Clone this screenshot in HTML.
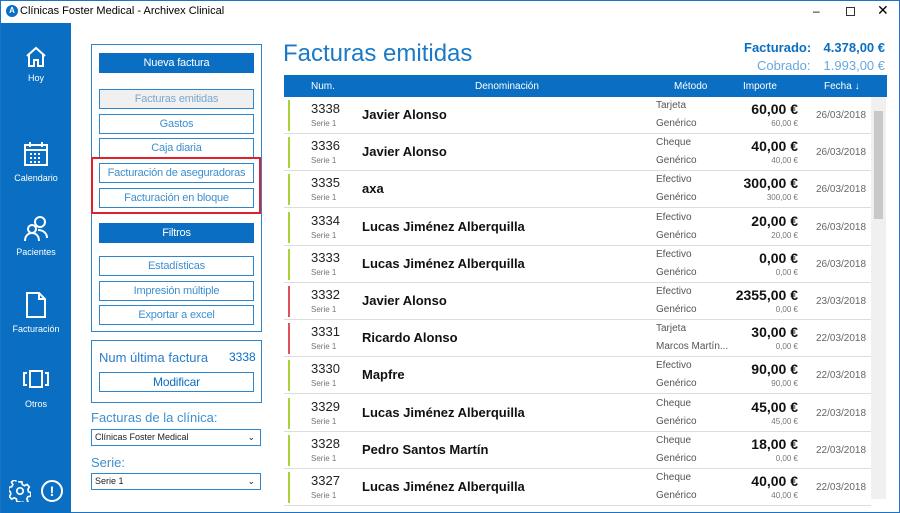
<!DOCTYPE html><html><head><meta charset="utf-8"><style>
*{margin:0;padding:0;box-sizing:border-box}
body{width:900px;height:513px;overflow:hidden;background:#fff;font-family:"Liberation Sans",sans-serif;position:relative;border:1px solid #1a73c4}
.a{position:absolute}
.title{left:0;top:0;width:898px;height:22px;background:#fff;font-size:12px;color:#000}
.side{left:0;top:22px;width:70px;height:490px;background:#0a6fc2;color:#fff;font-size:9px;text-align:center}
.side .it{position:absolute;left:0;width:70px}
.btn{position:absolute;left:98px;width:155px;height:20px;border:1px solid #2d86cc;color:#3d8fd0;font-size:11px;text-align:center;line-height:18px;background:#fff;white-space:nowrap;letter-spacing:-0.2px}
.bf{background:#0a6fc2;color:#fff;border-color:#0a6fc2}
.hdr{left:283px;top:74px;width:603px;height:22px;background:#0a6fc2;color:#fff;font-size:10px}
.hdr span{position:absolute;top:6px}
.row{position:absolute;left:283px;width:587px;height:37px;border-bottom:1px solid #ddd}
.row .bar{position:absolute;left:4px;top:3px;width:2px;height:31px;background:#a8d13a}
.n{position:absolute;left:27px;top:4px;font-size:13px;color:#222}
.s{position:absolute;left:27px;top:22px;font-size:8px;color:#777}
.nm{position:absolute;left:78px;top:10px;font-size:13px;font-weight:bold;color:#111}
.m1{position:absolute;left:372px;top:3px;font-size:10px;color:#555}
.m2{position:absolute;left:372px;top:21px;font-size:10px;color:#555}
.i1{position:absolute;right:73px;top:4px;font-size:14px;font-weight:bold;color:#111}
.i2{position:absolute;right:73px;top:22px;font-size:8px;color:#777}
.f{position:absolute;left:532px;top:13px;font-size:10px;color:#666}
.sel{position:absolute;left:90px;width:170px;height:17px;border:1px solid #2d86cc;font-size:9px;line-height:15px;padding-left:3px;color:#222}
.sel b{position:absolute;right:5px;top:0;font-weight:normal;font-size:9px}
</style></head><body>
<div class="a title"><span style="position:absolute;left:5px;top:4px;width:12px;height:12px;border-radius:50%;background:#0a6fc2;color:#fff;font-size:8px;text-align:center;line-height:12px;font-weight:bold">A</span><span style="position:absolute;left:19px;top:4px;font-size:11px">Clínicas Foster Medical - Archivex Clinical</span>
<span style="position:absolute;left:812px;top:3px;font-size:12px">–</span><span style="position:absolute;left:845px;top:6px;width:9px;height:9px;border:1px solid #333"></span><span style="position:absolute;left:876px;top:1px;font-size:14px">✕</span></div>
<div class="a side">
<div class="it" style="top:22px"><svg width="24" height="24" viewBox="0 0 24 24" fill="none" stroke="#fff" stroke-width="2"><path d="M3 11 12 3l9 8M5 9v12h5v-6h4v6h5V9"/></svg><div style="margin-top:2px">Hoy</div></div>
<div class="it" style="top:118px"><svg width="26" height="26" viewBox="0 0 26 26" fill="none" stroke="#fff" stroke-width="2"><rect x="2" y="4" width="22" height="20"/><path d="M2 9h22M7 1v5M19 1v5"/><path d="M7 13h12M7 17h12M7 21h12" stroke-dasharray="2 2"/></svg><div style="margin-top:4px">Calendario</div></div>
<div class="it" style="top:192px"><svg width="26" height="28" viewBox="0 0 26 28" fill="none" stroke="#fff" stroke-width="2"><circle cx="17" cy="7" r="5"/><circle cx="9" cy="14" r="4"/><path d="M2 26c0-5 3-8 7-8s7 3 7 8M15 15c5 0 9 3 9 8"/></svg><div style="margin-top:2px">Pacientes</div></div>
<div class="it" style="top:268px"><svg width="22" height="28" viewBox="0 0 22 28" fill="none" stroke="#fff" stroke-width="2"><path d="M2 2h12l6 6v18H2zM14 2v6h6"/></svg><div style="margin-top:3px">Facturación</div></div>
<div class="it" style="top:346px"><svg width="28" height="20" viewBox="0 0 28 20" fill="none" stroke="#fff" stroke-width="2"><rect x="8" y="2" width="12" height="16"/><path d="M5 4H2v12h3M23 4h3v12h-3"/></svg><div style="margin-top:8px">Otros</div></div>
<svg style="position:absolute;left:8px;top:457px" width="22" height="22" viewBox="0 0 24 24" fill="none" stroke="#fff" stroke-width="1.8"><circle cx="12" cy="12" r="3.5"/><path d="M10 2h4l.6 3 2.3 1.2 2.8-1.4 2.5 2.8-1.6 2.6.6 2.6 2.8 1.2-.4 3.6-3 .6-1.2 2.3 1.3 2.8-2.8 2.5-2.6-1.6-2.6.6L12 24l-3.4-.4-.6-3-2.3-1.2-2.8 1.4-2.5-2.8 1.6-2.6-.6-2.6L-.4 11.6 0 8l3-.6 1.2-2.3L2.8 2.3 5.6-.2 8.2 1.4"/></svg>
<div style="position:absolute;left:40px;top:457px;width:22px;height:22px;border:2px solid #fff;border-radius:50%;font-size:14px;line-height:18px;font-weight:bold">!</div>
</div>
<div class="a" style="left:90px;top:43px;width:171px;height:288px;border:1px solid #2d86cc"></div>
<div class="btn bf" style="top:52px">Nueva factura</div>
<div class="btn" style="top:88px;background:#f0f0f0;color:#7aa7cf">Facturas emitidas</div>
<div class="btn" style="top:113px">Gastos</div>
<div class="btn" style="top:137px">Caja diaria</div>
<div class="btn" style="top:162px">Facturación de aseguradoras</div>
<div class="btn" style="top:187px">Facturación en bloque</div>
<div class="a" style="left:90px;top:156px;width:170px;height:57px;border:2px solid #e0202a"></div>
<div class="btn bf" style="top:222px">Filtros</div>
<div class="btn" style="top:255px">Estadísticas</div>
<div class="btn" style="top:280px">Impresión múltiple</div>
<div class="btn" style="top:304px">Exportar a excel</div>
<div class="a" style="left:90px;top:339px;width:171px;height:63px;border:1px solid #2d86cc"></div>
<div class="a" style="left:98px;top:349px;font-size:13px;color:#2a7ec8">Num última factura</div>
<div class="a" style="left:228px;top:349px;font-size:12px;color:#0a6fc2">3338</div>
<div class="btn" style="top:371px;color:#0a6fc2;font-size:12px">Modificar</div>
<div class="a" style="left:90px;top:409px;font-size:13px;color:#3d8fd0">Facturas de la clínica:</div>
<div class="sel" style="top:428px">Clínicas Foster Medical<b>⌄</b></div>
<div class="a" style="left:90px;top:454px;font-size:13px;color:#3d8fd0">Serie:</div>
<div class="sel" style="top:472px">Serie 1<b>⌄</b></div>
<div class="a" style="left:282px;top:39px;font-size:24px;color:#1a7ac8">Facturas emitidas</div>
<div class="a" style="left:743px;top:39px;font-size:13px;font-weight:bold;color:#0a6fc2">Facturado:</div>
<div class="a" style="right:14px;top:39px;font-size:13px;font-weight:bold;color:#0a6fc2">4.378,00 €</div>
<div class="a" style="left:756px;top:57px;font-size:13px;color:#6aa8dc">Cobrado:</div>
<div class="a" style="right:14px;top:57px;font-size:13px;color:#6aa8dc">1.993,00 €</div>
<div class="a hdr"><span style="left:27px">Num.</span><span style="left:191px">Denominación</span><span style="left:390px">Método</span><span style="left:459px">Importe</span><span style="left:540px">Fecha ↓</span></div>
<div class="a" style="left:870px;top:96px;width:15px;height:402px;background:#f0f0f0"><div style="position:absolute;left:3px;top:14px;width:9px;height:108px;background:#c8c8c8"></div></div>
<div id="rows"></div>
<script>
var d=[["3338","Javier Alonso","Tarjeta","Genérico","60,00 €","60,00 €","26/03/2018",0],
["3336","Javier Alonso","Cheque","Genérico","40,00 €","40,00 €","26/03/2018",0],
["3335","axa","Efectivo","Genérico","300,00 €","300,00 €","26/03/2018",0],
["3334","Lucas Jiménez Alberquilla","Efectivo","Genérico","20,00 €","20,00 €","26/03/2018",0],
["3333","Lucas Jiménez Alberquilla","Efectivo","Genérico","0,00 €","0,00 €","26/03/2018",0],
["3332","Javier Alonso","Efectivo","Genérico","2355,00 €","0,00 €","23/03/2018",1],
["3331","Ricardo Alonso","Tarjeta","Marcos Martín...","30,00 €","0,00 €","22/03/2018",1],
["3330","Mapfre","Efectivo","Genérico","90,00 €","90,00 €","22/03/2018",0],
["3329","Lucas Jiménez Alberquilla","Cheque","Genérico","45,00 €","45,00 €","22/03/2018",0],
["3328","Pedro Santos Martín","Cheque","Genérico","18,00 €","0,00 €","22/03/2018",0],
["3327","Lucas Jiménez Alberquilla","Cheque","Genérico","40,00 €","40,00 €","22/03/2018",0]];
var h="";d.forEach(function(r,i){h+='<div class="row" style="top:'+(96+i*37.2)+'px"><div class="bar" style="background:'+(r[7]?'#e0505a':'#a8d13a')+'"></div><div class="n">'+r[0]+'</div><div class="s">Serie 1</div><div class="nm">'+r[1]+'</div><div class="m1">'+r[2]+'</div><div class="m2">'+r[3]+'</div><div class="i1">'+r[4]+'</div><div class="i2">'+r[5]+'</div><div class="f">'+r[6]+'</div></div>'});
document.getElementById("rows").innerHTML=h;
</script>
</body></html>
